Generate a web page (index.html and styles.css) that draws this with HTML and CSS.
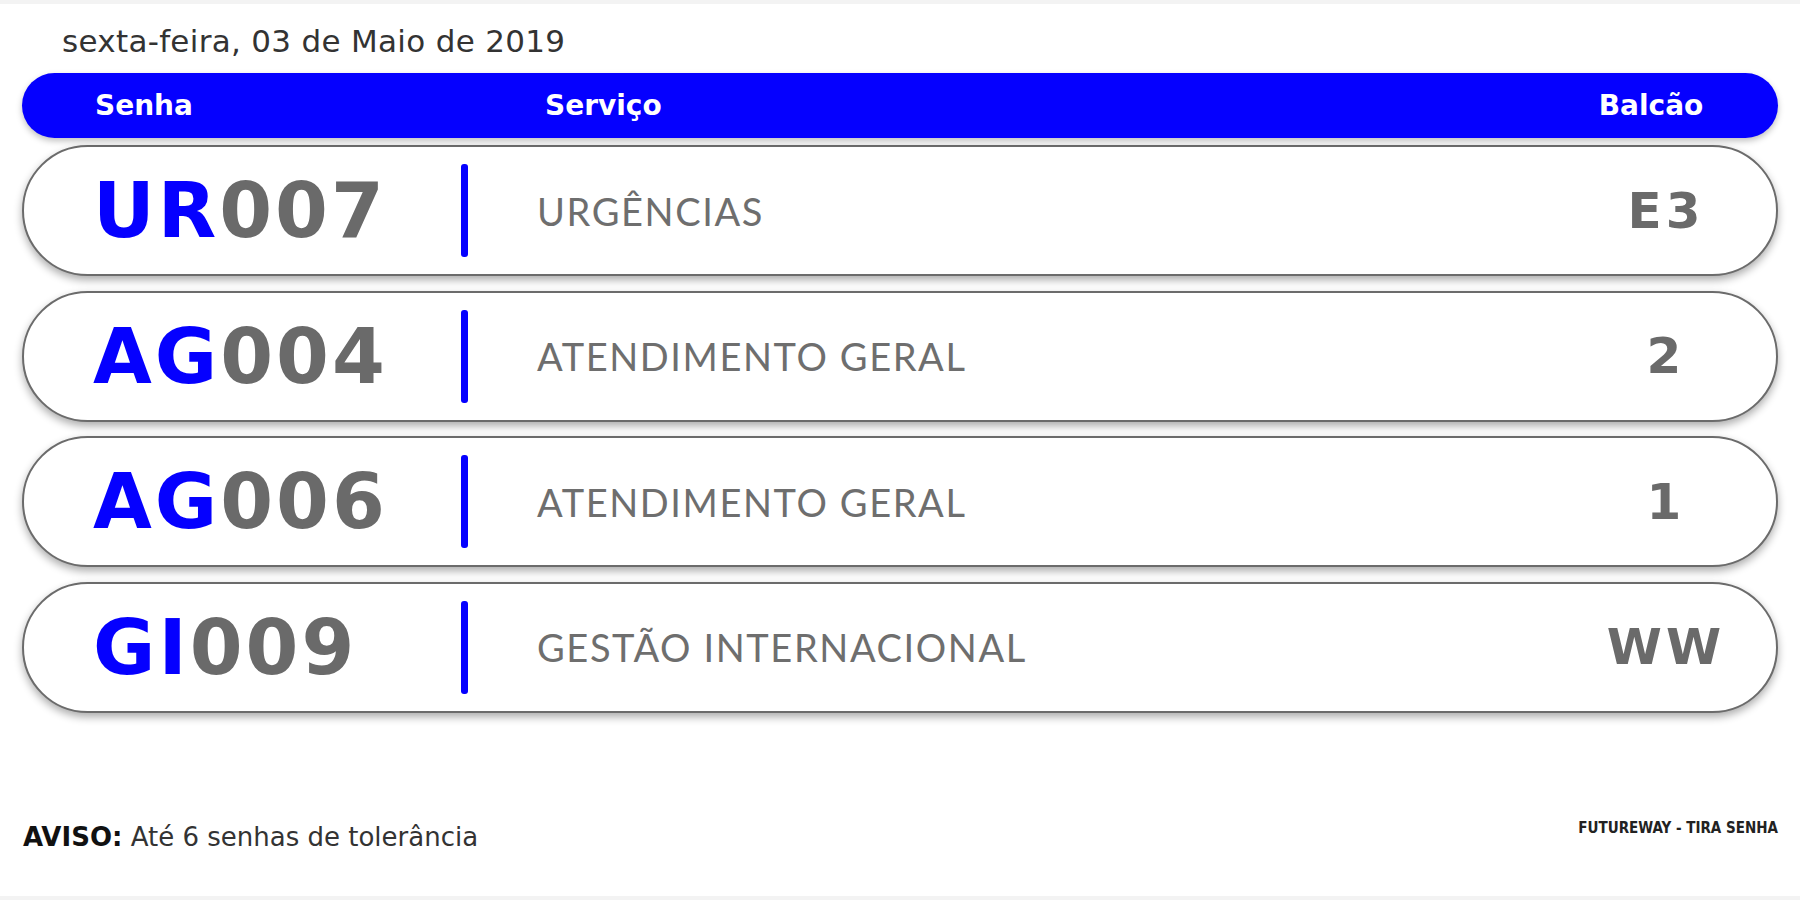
FILE: index.html
```html
<!DOCTYPE html>
<html lang="pt">
<head>
<meta charset="utf-8">
<title>Tira Senha</title>
<link rel="stylesheet" href="styles.css">
</head>
<body>
<div class="page">
  <div class="date">sexta-feira, 03 de Maio de 2019</div>
  <div class="board">
    <div class="head">
      <span class="h-senha">Senha</span>
      <span class="h-serv">Serviço</span>
      <span class="h-balc">Balcão</span>
    </div>
    <div class="row">
      <div class="ticket"><span class="pre">UR</span>007</div>
      <div class="sep"></div>
      <div class="serv">URGÊNCIAS</div>
      <div class="balc">E3</div>
    </div>
    <div class="row">
      <div class="ticket"><span class="pre">AG</span>004</div>
      <div class="sep"></div>
      <div class="serv">ATENDIMENTO GERAL</div>
      <div class="balc">2</div>
    </div>
    <div class="row">
      <div class="ticket"><span class="pre">AG</span>006</div>
      <div class="sep"></div>
      <div class="serv">ATENDIMENTO GERAL</div>
      <div class="balc">1</div>
    </div>
    <div class="row">
      <div class="ticket"><span class="pre">GI</span>009</div>
      <div class="sep"></div>
      <div class="serv">GESTÃO INTERNACIONAL</div>
      <div class="balc">WW</div>
    </div>
  </div>
  <div class="footer">
    <div class="aviso"><b>AVISO:</b> Até 6 senhas de tolerância</div>
    <div class="brand">FUTUREWAY - TIRA SENHA</div>
  </div>
</div>
</body>
</html>
```

FILE: styles.css
```css
html, body {
  margin: 0;
  padding: 0;
}
body {
  background: #f3f3f3;
  font-family: "DejaVu Sans", sans-serif;
}
.page {
  margin: 4px 0;
  height: 892px;
  box-sizing: border-box;
  background: #ffffff;
  padding: 19px 22px 0 22px;
  display: flex;
  flex-direction: column;
}
.date {
  margin-left: 40px;
  font-size: 31px;
  line-height: 36px;
  letter-spacing: 0.3px;
  color: #333333;
}
.board {
  margin-top: 14px;
  display: flex;
  flex-direction: column;
}
.head {
  height: 65px;
  background: #0500ff;
  border-radius: 33px;
  box-shadow: 0 3px 6px rgba(0, 0, 0, 0.25);
  display: grid;
  grid-template-columns: 450px 1fr 150px;
  align-items: center;
  padding: 0 52px 0 73px;
  color: #ffffff;
  font-weight: bold;
  font-size: 28px;
  position: relative;
  z-index: 2;
}
.h-balc {
  text-align: center;
}
.row {
  margin-top: 7px;
  height: 131px;
  box-sizing: border-box;
  border: 2px solid #6b6b6b;
  border-radius: 66px;
  background: #ffffff;
  box-shadow: 0 4px 8px rgba(0, 0, 0, 0.33);
  display: grid;
  grid-template-columns: 368px 7px 1fr 180px;
  align-items: center;
  padding: 0 20px 0 69px;
}
.row + .row {
  margin-top: 14.67px;
}
.ticket {
  font-weight: bold;
  font-size: 76px;
  letter-spacing: 3px;
  color: #6a6a6a;
  white-space: nowrap;
}
.pre {
  color: #0500ff;
}
.sep {
  width: 7px;
  height: 93px;
  background: #0500ff;
  border-radius: 3px;
}
.serv {
  padding-left: 69px;
  font-family: "Lato", sans-serif;
  font-size: 38px;
  letter-spacing: 1.6px;
  color: #6e6e6e;
  white-space: nowrap;
}
.balc {
  text-align: center;
  font-weight: bold;
  font-size: 50px;
  letter-spacing: 4px;
  color: #6a6a6a;
}
.footer {
  margin-top: auto;
  margin-bottom: 42px;
  display: flex;
  justify-content: space-between;
  align-items: center;
}
.aviso {
  font-size: 26px;
  line-height: 30px;
  color: #333333;
  margin-left: 1px;
}
.aviso b {
  color: #111111;
}
.brand {
  font-family: "DejaVu Sans Condensed", "DejaVu Sans", sans-serif;
  font-weight: bold;
  font-size: 15px;
  line-height: 16px;
  color: #222222;
  margin-bottom: 18px;
}
```
